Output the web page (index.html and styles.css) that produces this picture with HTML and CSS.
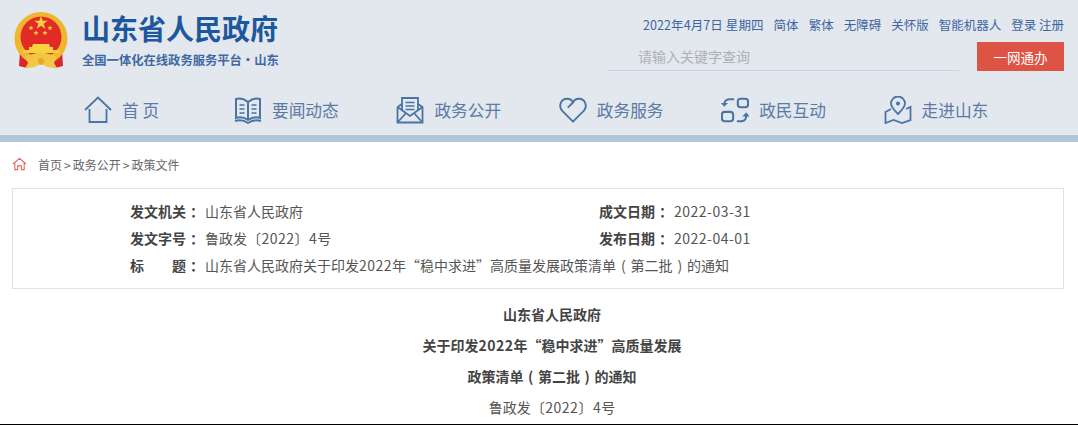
FILE: index.html
```html
<!DOCTYPE html>
<html>

<head>
<meta charset="utf-8">
<title>山东省人民政府</title>
<link rel="stylesheet" href="styles.css">
</head>

<body>
    <!-- top banner -->
    <div class="header">
        <div class="top">
            <div class="brand">
                <svg class="emblem" viewBox="0 0 56 58" width="56" height="58">
                    <defs>
                        <polygon id="star" points="0,-5 1.180,-1.620 4.760,-1.550 1.900,0.620 2.940,4.050 0,2 -2.940,4.050 -1.900,0.620 -4.760,-1.550 -1.180,-1.620" fill="#f7d23e"/>
                    </defs>
                    <path d="M7 40 L6 55 L14 57 L22 50 L34 50 L42 57 L50 55 L49 40 Z" fill="#d8262b"/>
                    <circle cx="28" cy="27.500" r="26.500" fill="#efb62e"/>
                    <circle cx="28" cy="26" r="20.500" fill="#e22b26"/>
                    <use href="#star" transform="translate(28 12) scale(1.400)"/>
                    <use href="#star" transform="translate(18 17) scale(.55)"/>
                    <use href="#star" transform="translate(37 17) scale(.55)"/>
                    <use href="#star" transform="translate(23 22) scale(.55)"/>
                    <use href="#star" transform="translate(32 22) scale(.55)"/>
                    <path d="M20 33 H36 L37 36 H40 V39 H45 L47 42 H9 L11 39 H16 V36 H19 Z" fill="#f7d23e"/>
                    <path d="M12 45 L28 41 L44 45 L41 52 L44 57 L34 56 L28 52 L22 56 L12 57 L15 52 Z" fill="#f2c744"/>
                    <circle cx="28" cy="50" r="3" fill="#e9a52a"/>
                </svg>
                <div class="brand-text">
                    <h1>山东省人民政府</h1>
                    <p>全国一体化在线政务服务平台·山东</p>
                </div>
            </div>
            <div class="tools">
                <div class="links">
                    <span class="date">2022年4月7日 星期四</span>
                    <span>简体</span>
                    <span>繁体</span>
                    <span>无障碍</span>
                    <span>关怀版</span>
                    <span>智能机器人</span>
                    <span class="login">登录&nbsp;注册</span>
                </div>
                <div class="search">
                    <input type="text" placeholder="请输入关键字查询">
                    <button>一网通办</button>
                </div>
            </div>
        </div>

        <div class="nav">
            <a class="nav-item nav-spaced">
                <svg viewBox="0 0 28 28" width="28" height="28" fill="none">
                    <path d="M1 14 L14 1.500 L27 14 M5.500 13 V26 H22.500 V13" stroke="#4a74a5" stroke-width="1.800"/>
                </svg>
                <span>首 页</span>
            </a>
            <a class="nav-item">
                <svg viewBox="0 0 28 28" width="28" height="28" fill="none" stroke="#4a74a5" stroke-width="2">
                    <path d="M14 6 Q8 1 2 3 V22 Q8 20 14 24 Q20 20 26 22 V3 Q20 1 14 6 V24"/>
                    <path d="M1 25 Q8 23 14 27 Q20 23 27 25"/>
                    <path d="M5.500 9 H10.500 M5.500 13 H10.500 M5.500 17 H10.500 M17.500 9 H22.500 M17.500 13 H22.500 M17.500 17 H22.500" stroke-width="1.600"/>
                </svg>
                <span>要闻动态</span>
            </a>
            <a class="nav-item">
                <svg viewBox="0 0 28 28" width="28" height="28" fill="none" stroke="#4a74a5" stroke-width="1.800">
                    <path d="M1.500 11 V26.500 H26.500 V11 L22 8"/>
                    <path d="M6 8 L1.500 11 M6 15 V2 H22 V15"/>
                    <path d="M1.500 11 L14 20 L26.500 11 M1.500 26.500 L10 17 M26.500 26.500 L18 17"/>
                    <path d="M9.500 6.500 H18.500 M9.500 10 H18.500 M9.500 13.500 H18.500" stroke-width="1.400"/>
                </svg>
                <span>政务公开</span>
            </a>
            <a class="nav-item">
                <svg viewBox="0 0 30 28" width="28" height="28" fill="none">
                    <path d="M15 26.500 L3.500 15 C-1 10 2 2 8.500 2 C12 2 14 3.500 15 6 L10 11 M15 6 C16 3.500 18 2 21.500 2 C28 2 31 10 26.500 15 L15 26.500" stroke="#4a74a5" stroke-width="2" stroke-linecap="round"/>
                </svg>
                <span>政务服务</span>
            </a>
            <a class="nav-item">
                <svg viewBox="0 0 30 28" width="28" height="28" fill="none" stroke="#4a74a5" stroke-width="2.200">
                    <rect x="18" y="2" width="11" height="9" rx="3"/>
                    <rect x="1" y="16" width="12" height="10" rx="3"/>
                    <path d="M14 2.500 H9 Q4 2.500 3.500 8"/>
                    <path d="M0.500 6.500 L3.500 10 L7 6.500" fill="#4a74a5" stroke-width="1"/>
                    <path d="M17 26 H22 Q27 26 27 20"/>
                    <path d="M23.500 21 L27 17 L30 21" fill="#4a74a5" stroke-width="1"/>
                </svg>
                <span>政民互动</span>
            </a>
            <a class="nav-item">
                <svg viewBox="0 0 28 28" width="28" height="28" fill="none" stroke="#4a74a5" stroke-width="1.800">
                    <path d="M14 18 C10 14 7 11 7 7.500 A7 7 0 0 1 21 7.500 C21 11 18 14 14 18 Z"/>
                    <circle cx="14" cy="7.500" r="2" fill="#4a74a5" stroke="none"/>
                    <path d="M7 13 L1.500 16 V27 L9.500 24 L18 27 L26.500 24 V11 L22 13"/>
                </svg>
                <span>走进山东</span>
            </a>
        </div>
    </div>
    <div class="strip"></div>

    <!-- breadcrumb -->
    <div class="crumb">
        <svg viewBox="0 0 16 14" width="15" height="14" fill="none" stroke="#dd6a5c" stroke-width="1.200">
            <path d="M1 7 L8 1 L15 7 M3 6 V13 H6 V9 H10 V13 H13 V6"/>
        </svg>
        <span>首页<span class="sep">&gt;</span>政务公开<span class="sep">&gt;</span>政策文件</span>
    </div>

    <!-- document info -->
    <div class="info">
        <div class="info-row">
            <div class="info-cell"><b>发文机关<span class="colon">：</span></b>山东省人民政府</div>
            <div class="info-cell"><b>成文日期<span class="colon">：</span></b><span class="num">2022-03-31</span></div>
        </div>
        <div class="info-row">
            <div class="info-cell"><b>发文字号<span class="colon">：</span></b>鲁政发<span class="num">〔2022〕4</span>号</div>
            <div class="info-cell"><b>发布日期<span class="colon">：</span></b><span class="num">2022-04-01</span></div>
        </div>
        <div class="info-row">
            <div class="info-cell"><b class="spread"><i>标</i><i>题</i></b><b><span class="colon">：</span></b>山东省人民政府关于印发<span class="num">2022</span>年“稳中求进”高质量发展政策清单<span class="paren">(</span>第二批<span class="paren">)</span>的通知</div>
        </div>
    </div>

    <!-- article title -->
    <div class="article">
        <p class="strong">山东省人民政府</p>
        <p class="strong">关于印发<span class="num">2022</span>年“稳中求进”高质量发展</p>
        <p class="strong">政策清单<span class="paren">(</span>第二批<span class="paren">)</span>的通知</p>
        <p>鲁政发<span class="num">〔2022〕4</span>号</p>
    </div>
</body>

</html>
```
FILE: styles.css
```css
* {
    box-sizing: border-box;
}

html, body {
    margin: 0;
    height: 425px;
    overflow: hidden;
}

body {
    font-family: "Noto Sans CJK SC", "Noto Sans", sans-serif;
    background: #fff;
    color: #555;
    border-bottom: 1px solid #000;
}

.header {
    background: #e3e7ee;
    height: 135px;
    padding: 9px 14px 0 13px;
}

.top {
    display: flex;
    justify-content: space-between;
    height: 65px;
}

.brand {
    display: flex;
}

.emblem {
    margin: 2px 13px 0 0;
}

h1 {
    margin: -1px 0 0;
    font-size: 28px;
    line-height: 40px;
    font-weight: 700;
    color: #1d589c;
}

.brand-text p {
    margin: 3px 0 0;
    font-size: 12.300px;
    line-height: 18px;
    font-weight: 700;
    color: #3f69a3;
}

.tools {
    display: flex;
    flex-direction: column;
    align-items: flex-end;
}

.links {
    display: flex;
    gap: 10px;
    margin-top: 7px;
    font-size: 12.500px;
    line-height: 18px;
    color: #3d66a1;
}

.date {
    letter-spacing: .1px;
}

.search {
    display: flex;
    gap: 18px;
    margin-top: 8px;
}

.search input {
    width: 351px;
    height: 29px;
    padding: 0 0 0 30px;
    border: 0;
    border-bottom: 1px solid #c8d3e3;
    background: none;
    font: 14px "Noto Sans CJK SC", sans-serif;
}

.search input::placeholder {
    color: #aeb1b6;
}

.search button {
    width: 87px;
    height: 29px;
    border: 0;
    padding: 0;
    background: #dd5444;
    color: #fff;
    font: 13.500px "Noto Sans CJK SC", sans-serif;
}

.nav {
    display: flex;
    margin: 19px 0 0 71px;
}

.nav-item {
    display: flex;
    align-items: center;
    gap: 10px;
    width: 162.400px;
    height: 34px;
    font-size: 16.700px;
    color: #5b7ba6;
}

.nav-spaced {
    width: 150px;
}

.strip {
    height: 7px;
    background: #b3c5d8;
}

.crumb {
    display: flex;
    align-items: center;
    gap: 11px;
    height: 46px;
    padding: 0 0 2px 12px;
    font-size: 12px;
    color: #666;
}

.sep {
    margin: 0 2px;
}

.info {
    height: 101px;
    margin: 0 14px 0 12px;
    padding: 9px 0 0 117px;
    border: 1px solid #e2e2e2;
    font-size: 14px;
    line-height: 27px;
}

.info-row {
    display: flex;
}

.info-cell:first-child {
    width: 469px;
    flex: none;
}

.info-row:last-child .info-cell {
    width: auto;
}

.info b {
    color: #444;
}

.colon {
    margin: 0 1px 0 4px;
}

.num {
    letter-spacing: .5px;
}

.paren {
    display: inline-block;
    width: 14.500px;
    text-align: center;
}

.spread {
    display: inline-flex;
    justify-content: space-between;
    width: 56px;
}

.spread i {
    font-style: normal;
}

.article {
    padding: 10px 0 0 26px;
    text-align: center;
    font-size: 14px;
    line-height: 31px;
}

.article p {
    margin: 0;
}

.article .strong {
    font-weight: 700;
    color: #444;
}
```
